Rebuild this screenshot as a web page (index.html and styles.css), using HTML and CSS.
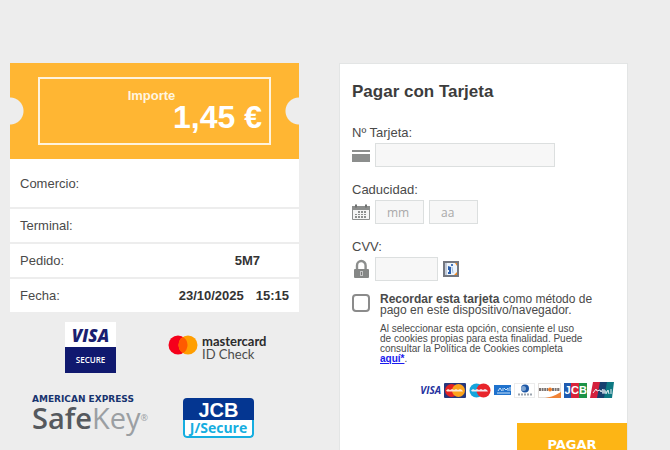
FILE: index.html
```html
<!DOCTYPE html>
<html lang="es">
<head>
<meta charset="UTF-8">
<title>Pagar con Tarjeta</title>
<link rel="stylesheet" href="styles.css">
</head>
<body>
<main class="page">
	<!-- datos de la operación -->
	<section class="summary">
		<div class="ticket">
			<div class="ticketBox">
				<p class="ticketLabel">Importe</p>
				<p class="ticketAmount">1,45 €</p>
			</div>
		</div>
		<dl class="data">
			<div class="row rowTall"><dt>Comercio:</dt><dd></dd></div>
			<div class="row"><dt>Terminal:</dt><dd></dd></div>
			<div class="row"><dt>Pedido:</dt><dd class="order">5M7</dd></div>
			<div class="row"><dt>Fecha:</dt><dd><span>23/10/2025</span><span>15:15</span></dd></div>
		</dl>
		<div class="logos">
			<div class="visaSecure">
				<span class="visaTop">VISA</span>
				<span class="visaBottom">SECURE</span>
			</div>
			<div class="idCheck">
				<svg width="30" height="20" viewBox="0 0 30 20">
					<circle cx="10" cy="10" r="9.5" fill="#f5001b"/>
					<circle cx="20" cy="10" r="9.5" fill="#ff9e00"/>
					<path d="M15 1.9a9.5 9.5 0 0 1 0 16.2a9.5 9.5 0 0 1 0-16.2z" fill="#ff5a00"/>
				</svg>
				<p><b>mastercard</b><br>ID Check</p>
			</div>
			<div class="safeKey">
				<p class="amexName">AMERICAN EXPRESS</p>
				<p class="safeName"><b>Safe</b>Key<sup>®</sup></p>
			</div>
			<div class="jSecure">
				<span class="jcbTop">JCB</span>
				<span class="jcbBottom">J/Secure</span>
			</div>
		</div>
	</section>

	<!-- formulario de pago -->
	<form class="card">
		<h1>Pagar con Tarjeta</h1>
		<div class="field">
			<label for="number">Nº Tarjeta:</label>
			<div class="line">
				<svg class="icon" width="18" height="20" viewBox="0 0 18 20" fill="#8c8e8d">
					<path d="M0 5h18v2H0zM0 9h18v8H0z"/>
				</svg>
				<input id="number" class="wide" type="text">
			</div>
		</div>
		<div class="field">
			<label for="month">Caducidad:</label>
			<div class="line">
				<svg class="icon" width="18" height="20" viewBox="0 0 18 20">
					<path d="M.5 4.500h17v13H.5z" fill="#f4f4f4" stroke="#8c8e8d"/>
					<path d="M0 4h18v4H0z" fill="#8c8e8d"/>
					<path d="M3 2.500h2v3H3zM13 2.500h2v3h-2z" fill="#6f7170"/>
					<path d="M6 9h2v2H6zM9 9h2v2H9zM12 9h2v2h-2zM3 12h2v1H3zM6 12h2v1H6zM9 12h2v1H9zM12 12h2v1h-2zM3 14h2v2H3zM6 14h2v2H6zM9 14h2v2H9zM12 14h2v2h-2z" fill="#8c8e8d"/>
				</svg>
				<input id="month" class="date" type="text" placeholder="mm">
				<input class="date" type="text" placeholder="aa" aria-label="Año">
			</div>
		</div>
		<div class="field">
			<label for="cvv">CVV:</label>
			<div class="line">
				<svg class="icon" width="18" height="20" viewBox="0 0 18 20">
					<path d="M5 11V6.500a4.300 4.500 0 0 1 8.600 0V11" fill="none" stroke="#8c8e8d" stroke-width="2.400"/>
					<rect x="2" y="10" width="15" height="9" rx="1" fill="#858786"/>
					<path d="M8 12h3v5H8z" fill="#c4c5c5"/>
					<path d="M9 13h1v3H9z" fill="#777"/>
				</svg>
				<input id="cvv" class="short" type="text">
				<svg class="help" width="16" height="16" viewBox="0 0 16 16">
					<rect x="1" y="1" width="14" height="14" fill="#edf4fb" stroke="#74777f" stroke-width="2"/>
					<path d="M2 2h2v12H2z" fill="#c3cbd8"/>
					<path d="M5 5l3 1v7H5v-2h1V9H5z" fill="#2c5fad"/>
					<path d="M8 3h2v2H8z" fill="#4677bd"/>
					<path d="M9 6l1 6" stroke="#9dbbe4"/>
					<path d="M12 2h2v3zM11 14l3-3v3z" fill="#f08a24"/>
				</svg>
			</div>
		</div>
		<div class="remember">
			<input id="remember" type="checkbox">
			<div>
				<label for="remember"><b>Recordar esta tarjeta</b> como método de pago en este dispositivo/navegador.</label>
				<p class="note">Al seleccionar esta opción, consiente el uso de cookies propias para esta finalidad. Puede consultar la Política de Cookies completa <a href="#">aquí*</a>.</p>
			</div>
		</div>
		<div class="brands">
			<span class="brandVisa">VISA</span>
			<svg width="22" height="15" viewBox="0 0 22 15">
				<rect width="22" height="15" rx="1" fill="#26377d"/>
				<circle cx="7.500" cy="7.500" r="6.500" fill="#e42222"/>
				<circle cx="14.500" cy="7.500" r="6.500" fill="#fca31b"/>
				<path d="M2 7.500l2-1.500 2 1 2-1 2 1 2-1 2 1 2-1 2 1 1 1.500H3z" fill="#fbe6d6"/>
			</svg>
			<svg width="22" height="15" viewBox="0 0 22 15">
				<circle cx="7.500" cy="7.500" r="7" fill="#16a5dc"/>
				<circle cx="14.500" cy="7.500" r="7" fill="#e8252c"/>
				<path d="M2 7.500l2-1.500 2 1 2-1 2 1 2-1 2 1 2-1 2 1 1 1.500H3z" fill="#f3e9ee"/>
			</svg>
			<svg width="17" height="10" viewBox="0 0 17 10">
				<rect width="17" height="10" fill="#1f72cd"/>
				<path d="M4 6l2-3 2 3M9 3v3M10 3l2 2 2-2v3M3 8h13M15 3h2M15 5h2" fill="none" stroke="#c9e1f7"/>
			</svg>
			<svg width="21" height="15" viewBox="0 0 21 15">
				<rect x=".5" y=".5" width="20" height="14" fill="#fff" stroke="#ececec"/>
				<circle cx="11" cy="5.500" r="4" fill="#1d57a6"/>
				<circle cx="9.500" cy="5.500" r="2.500" fill="#7fa4d0"/>
				<path d="M4 11.500h14" stroke="#9aa3ae" stroke-width="2" stroke-dasharray="2 1"/>
			</svg>
			<svg width="23" height="15" viewBox="0 0 23 15">
				<rect x=".5" y=".5" width="22" height="14" fill="#fff" stroke="#e3dfdc"/>
				<path d="M1 6.500h9M14 6.500h8" stroke="#7b7370" stroke-width="3" stroke-dasharray="2 .6"/>
				<circle cx="12" cy="6.500" r="2" fill="#ef7b24"/>
				<path d="M7 15c7-1 11-3 16-6v6z" fill="#f08235"/>
			</svg>
			<span class="brandJcb"><i>J</i><i>C</i><i>B</i></span>
			<svg width="24" height="16" viewBox="0 0 24 16">
				<path d="M3 0h9L9 16H0z" fill="#d4213d"/>
				<path d="M10 0h8l-3 16H7z" fill="#17406f"/>
				<path d="M17 0h7l-2 16h-8z" fill="#0d7882"/>
				<path d="M3 11l3-4 1 2 3-1 1 2 2-3M13 12V8h2v4M16 12l2-4 1 4M21 7v5M12 10h5" fill="none" stroke="#e5eef2"/>
			</svg>
		</div>
		<button type="submit" class="pay">PAGAR</button>
	</form>
</main>
</body>
</html>
```
FILE: styles.css
```css
*{box-sizing:border-box;}
body{margin:0; height:100vh; overflow:hidden; background-color:#ededed; color:#4a4a4a;
	font-family:"Liberation Sans", Arial, sans-serif; font-size:13px; line-height:16px;}
p, dl, dd, h1{margin:0;}
svg{display:block; flex:none;}

.page{display:grid; grid-template-columns:minmax(0, 1fr) minmax(0, 1fr); gap:40px; align-items:start;
	padding:63px 42px 0 10px;}

/* ticket con las muescas laterales */
.ticket{padding:14px 28px; color:#fff; font-weight:bold;
	background:radial-gradient(circle at 0 48px, #ededed 13px, transparent 14px),
		radial-gradient(circle at 100% 48px, #ededed 13px, transparent 14px), #ffb633;}
.ticketBox{height:68px; padding:9px 7px 0; border:2px solid #fff3dc;}
.ticketLabel{padding-right:6px; text-align:center; line-height:15px; color:#fff5e0;}
.ticketAmount{font-size:32px; line-height:28px; text-align:right;}

/* filas de datos */
.row{display:flex; justify-content:space-between; align-items:center; height:35px; padding:0 10px;
	background-color:#fff; border-bottom:2px solid #ededed;}
.rowTall{height:50px; border-top:2px solid #fff;}
.row:last-child{height:33px; border-bottom:0;}
.row dd{display:flex; gap:12px; font-weight:bold; color:#333;}
.row .order{padding-right:29px;}

/* logos de seguridad */
.logos{display:grid; grid-template-columns:138px 1fr; row-gap:22px; align-items:center; padding:10px 0 0 20px;}
.visaSecure{display:flex; flex-direction:column; width:51px; height:51px; margin-left:35px;
	text-align:center; background-color:#fff; color:#1a1f71; font-family:"Open Sans", sans-serif;}
.visaTop{height:25px; font-size:17px; line-height:27px; font-weight:800; font-style:italic;}
.visaBottom{height:26px; font-size:8px; line-height:25px; font-weight:600; color:#fff; background-color:#10196f;}
.idCheck{display:flex; align-items:flex-start; gap:4px; color:#4b4b4b; font-family:Lato, sans-serif;
	font-size:13px; line-height:13px;}
.idCheck b{color:#2b2b2b;}
.safeKey{align-self:start; margin-left:2px; color:#9b9fa3; font-family:"Open Sans", sans-serif;}
.amexName{color:#17336f; font-family:"DejaVu Sans", sans-serif; font-size:9px; line-height:9px;
	font-weight:bold; white-space:nowrap;}
.safeName{font-size:29px; line-height:27px; white-space:nowrap;}
.safeName b{color:#55595e; font-weight:600;}
.safeName sup{font-size:9px; line-height:9px; vertical-align:8px;}
.jSecure{display:flex; flex-direction:column; width:71px; height:40px; margin:3px 0 0 15px; overflow:hidden;
	border-radius:4px; text-align:center; font-weight:bold;}
.jcbTop{height:22px; font-size:20px; line-height:24px; color:#fff; background-color:#043691;}
.jcbBottom{height:18px; border:2px solid #16aee0; border-radius:0 0 4px 4px; border-top:0; background-color:#fff;
	color:#16aee0; font-family:"Open Sans", sans-serif; font-size:14px; line-height:15px;}

/* tarjeta del formulario */
.card{display:flex; flex-direction:column; padding:19px 0 0 12px; background-color:#fff; border:1px solid #e3e5e5;}
.card h1{margin-bottom:24px; color:#3c3c3c; font-size:17px; line-height:18px;}
.field + .field{margin-top:15px;}
.field label{display:block; margin-bottom:2px;}
.line{display:flex; align-items:center; gap:5px;}
.line input{height:24px; padding:0 11px; background-color:#f7f7f7; border:1px solid #dcdfdf; border-radius:0;
	color:#555; font-family:"Open Sans", sans-serif; font-size:12px;}
.line input::placeholder{color:#a9a9a9;}
.wide{width:180px;}
.date{width:49px;}
.short{width:63px;}

/* recordar tarjeta */
.remember{display:flex; align-items:flex-start; gap:10px; width:244px; margin-top:13px; font-size:12px;}
.remember label{display:block; line-height:11px;}
.remember input{flex:none; appearance:none; width:18px; height:18px; margin:0; background-color:#fff;
	border:2px solid #8b8b8b; border-radius:4px;}
.note{width:206px; margin-top:8px; font-size:10px; line-height:10px;}
.note a{color:#1a1aee; font-weight:bold;}

/* marcas aceptadas */
.brands{display:flex; justify-content:flex-end; align-items:center; gap:3px; padding:18px 13px 0 0;}
.brandVisa{color:#2432a0; font-family:"Open Sans", sans-serif; font-size:10px; line-height:15px;
	font-weight:700; font-style:italic;}
.brandJcb{display:flex; color:#fff; font-size:11px; line-height:15px; font-weight:bold;}
.brandJcb i{width:7px; text-align:center; font-style:normal; background-color:#1f5bb0;}
.brandJcb i + i{width:8px; background-color:#d9243a;}
.brandJcb i + i + i{background-color:#1d9347;}

.pay{align-self:flex-end; width:110px; height:42px; margin-top:25px; padding:0; border:0; color:#fff;
	background-color:#fdb515; font-family:"DejaVu Sans", sans-serif; font-size:13px; font-weight:bold;}
```
